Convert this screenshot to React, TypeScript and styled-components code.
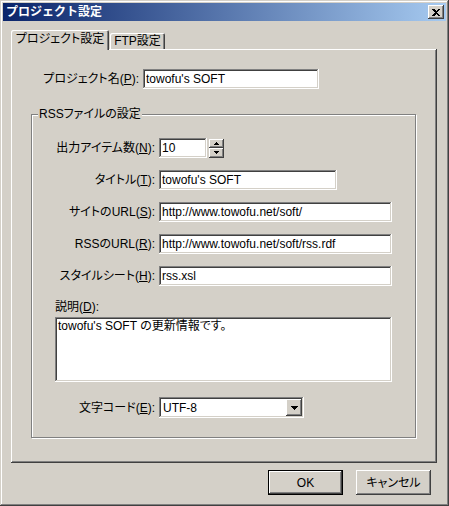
import React from 'react';
import styled, { createGlobalStyle, css } from 'styled-components';

const GlobalStyle = createGlobalStyle`
  html, body {
    margin: 0;
    padding: 0;
    background: #d4d0c8;
  }
  body {
    font-family: "Liberation Sans", "Noto Sans CJK JP", sans-serif;
    font-size: 12px;
    line-height: 14px;
    color: #000;
    font-feature-settings: "palt";
  }
`;

const raised = css`
  box-shadow: inset -1px -1px #404040, inset 1px 1px #fff, inset -2px -2px #808080, inset 2px 2px #d4d0c8;
`;

const sunken = css`
  box-shadow: inset -1px -1px #fff, inset 1px 1px #808080, inset -2px -2px #d4d0c8, inset 2px 2px #404040;
`;

const Window = styled.div`
  width: 449px;
  height: 506px;
  box-sizing: border-box;
  padding: 3px;
  display: flex;
  flex-direction: column;
  background: #d4d0c8;
  box-shadow: inset -1px -1px #404040, inset 1px 1px #d4d0c8, inset -2px -2px #808080, inset 2px 2px #fff;
`;

const TitleBar = styled.div`
  height: 18px;
  flex: none;
  display: flex;
  align-items: center;
  justify-content: space-between;
  padding: 0 2px 0 3px;
  background: linear-gradient(90deg, #0a246a 0%, #a6caf0 100%);
  color: #fff;
  font-weight: bold;
  font-size: 12px;
  font-feature-settings: normal;
`;

const CloseButton = styled.div`
  width: 16px;
  height: 14px;
  display: flex;
  align-items: center;
  justify-content: center;
  background: #d4d0c8;
  ${raised}
`;

const Main = styled.div`
  flex: 1;
  display: flex;
  flex-direction: column;
  padding: 9px 9px 8px 8px;
`;

const TabStrip = styled.div`
  height: 19px;
  flex: none;
  display: flex;
  align-items: flex-end;
  position: relative;
  z-index: 1;
`;

const Tab = styled.div<{ $active?: boolean; $width: number }>`
  box-sizing: border-box;
  width: ${({ $width }) => $width}px;
  display: flex;
  align-items: center;
  justify-content: center;
  background: #d4d0c8;
  border-radius: 2px 2px 0 0;
  box-shadow: inset 1px 1px #fff, inset -1px 0 #404040, inset -2px 0 #808080;
  ${({ $active }) =>
    $active
      ? css`
          height: 20px;
          margin-bottom: -1px;
          padding-bottom: 2px;
        `
      : css`
          height: 16px;
          margin-left: 1px;
        `}
`;

const Panel = styled.div`
  flex: 1;
  display: flex;
  flex-direction: column;
  padding: 20px 21px 0 20px;
  box-shadow: inset -1px -1px #404040, inset 1px 1px #fff, inset -2px -2px #808080;
`;

const ProjectRow = styled.div`
  display: grid;
  grid-template-columns: 108px 176px;
  column-gap: 4px;
  align-items: center;
`;

const Label = styled.label<{ $align?: 'left' | 'right' }>`
  text-align: ${({ $align }) => $align ?? 'right'};
  white-space: nowrap;
`;

const TextBox = styled.input<{ $width?: number }>`
  box-sizing: border-box;
  width: ${({ $width }) => ($width ? `${$width}px` : '100%')};
  height: 20px;
  margin: 0;
  border: none;
  outline: none;
  padding: 0 3px;
  background: #fff;
  font: inherit;
  color: #000;
  ${sunken}
`;

const GroupBox = styled.fieldset`
  margin: 18px 0 0 0;
  padding: 0;
  border: 1px solid #808080;
  box-shadow: inset 1px 1px #fff, 1px 1px #fff;
`;

const Legend = styled.legend`
  margin-left: 6px;
  padding: 0 1px;
  background: #d4d0c8;
  line-height: 14px;
`;

const GroupBody = styled.div`
  display: flex;
  flex-direction: column;
  padding: 17px 23px 19px 23px;
`;

const FieldRow = styled.div<{ $gap?: number }>`
  display: grid;
  grid-template-columns: 100px 1fr;
  column-gap: 4px;
  align-items: center;
  margin-top: ${({ $gap }) => $gap ?? 12}px;
  &:first-child {
    margin-top: 0;
  }
`;

const FieldCell = styled.div`
  display: flex;
  align-items: center;
  gap: 1px;
`;

const Spinner = styled.div`
  width: 15px;
  height: 19px;
  display: flex;
  flex-direction: column;
  margin-left: 1px;
`;

const SpinButton = styled.div`
  flex: 1;
  display: flex;
  align-items: center;
  justify-content: center;
  background: #d4d0c8;
  ${raised}
`;

const DescLabel = styled(Label)`
  margin-top: 14px;
`;

const MemoBox = styled.textarea`
  box-sizing: border-box;
  height: 65px;
  margin: 3px 0 0 0;
  border: none;
  outline: none;
  resize: none;
  overflow: hidden;
  padding: 2px 3px;
  background: #fff;
  font: inherit;
  color: #000;
  ${sunken}
`;

const Combo = styled.div`
  box-sizing: border-box;
  width: 145px;
  height: 21px;
  display: flex;
  align-items: center;
  justify-content: space-between;
  padding: 2px 2px 2px 4px;
  background: #fff;
  ${sunken}
`;

const DropButton = styled.div`
  width: 16px;
  height: 17px;
  display: flex;
  align-items: center;
  justify-content: center;
  background: #d4d0c8;
  ${raised}
`;

const ButtonRow = styled.div`
  display: flex;
  justify-content: flex-end;
  gap: 13px;
  margin-top: 7px;
  padding-right: 6px;
`;

const PushButton = styled.button<{ $default?: boolean }>`
  box-sizing: border-box;
  width: 75px;
  height: 25px;
  margin: 0;
  padding: 0;
  border: none;
  background: #d4d0c8;
  font: inherit;
  color: #000;
  ${({ $default }) =>
    $default
      ? css`
          box-shadow: inset 0 0 0 1px #000, inset -2px -2px #404040, inset 2px 2px #fff, inset -3px -3px #808080;
        `
      : raised}
`;

const Arrow = ({ dir, w = 7 }: { dir: 'up' | 'down'; w?: number }) => {
  const h = Math.ceil(w / 2);
  const pts = dir === 'down' ? `0,0 ${w},0 ${w / 2},${h}` : `0,${h} ${w},${h} ${w / 2},0`;
  return (
    <svg width={w} height={h} viewBox={`0 0 ${w} ${h}`}>
      <polygon points={pts} fill="#000" shapeRendering="crispEdges" />
    </svg>
  );
};

const CloseIcon = () => (
  <svg width="8" height="7" viewBox="0 0 8 7">
    <path d="M0 0h2l2 2 2-2h2L5 3.5 8 7H6L4 5 2 7H0l3-3.5z" fill="#000" shapeRendering="crispEdges" />
  </svg>
);

const Mn = ({ k }: { k: string }) => (
  <>
    (<u>{k}</u>):
  </>
);

export default function App() {
  return (
    <>
      <GlobalStyle />
      <Window>
        <TitleBar>
          <span>プロジェクト設定</span>
          <CloseButton>
            <CloseIcon />
          </CloseButton>
        </TitleBar>
        <Main>
          <TabStrip>
            <Tab $active $width={98}>
              プロジェクト設定
            </Tab>
            <Tab $width={55}>FTP設定</Tab>
          </TabStrip>
          <Panel>
            <ProjectRow>
              <Label>
                プロジェクト名<Mn k="P" />
              </Label>
              <TextBox defaultValue="towofu's SOFT" />
            </ProjectRow>
            <GroupBox>
              <Legend>RSSファイルの設定</Legend>
              <GroupBody>
                <FieldRow>
                  <Label>
                    出力アイテム数<Mn k="N" />
                  </Label>
                  <FieldCell>
                    <TextBox $width={48} defaultValue="10" />
                    <Spinner>
                      <SpinButton>
                        <Arrow dir="up" w={5} />
                      </SpinButton>
                      <SpinButton>
                        <Arrow dir="down" w={5} />
                      </SpinButton>
                    </Spinner>
                  </FieldCell>
                </FieldRow>
                <FieldRow>
                  <Label>
                    タイトル<Mn k="T" />
                  </Label>
                  <TextBox $width={178} defaultValue="towofu's SOFT" />
                </FieldRow>
                <FieldRow>
                  <Label>
                    サイトのURL<Mn k="S" />
                  </Label>
                  <TextBox defaultValue="http://www.towofu.net/soft/" />
                </FieldRow>
                <FieldRow>
                  <Label>
                    RSSのURL<Mn k="R" />
                  </Label>
                  <TextBox defaultValue="http://www.towofu.net/soft/rss.rdf" />
                </FieldRow>
                <FieldRow>
                  <Label>
                    スタイルシート<Mn k="H" />
                  </Label>
                  <TextBox defaultValue="rss.xsl" />
                </FieldRow>
                <DescLabel $align="left">
                  説明<Mn k="D" />
                </DescLabel>
                <MemoBox defaultValue="towofu's SOFT の更新情報です。" />
                <FieldRow $gap={15}>
                  <Label>
                    文字コード<Mn k="E" />
                  </Label>
                  <Combo>
                    <span>UTF-8</span>
                    <DropButton>
                      <Arrow dir="down" w={7} />
                    </DropButton>
                  </Combo>
                </FieldRow>
              </GroupBody>
            </GroupBox>
          </Panel>
          <ButtonRow>
            <PushButton $default>OK</PushButton>
            <PushButton>キャンセル</PushButton>
          </ButtonRow>
        </Main>
      </Window>
    </>
  );
}
